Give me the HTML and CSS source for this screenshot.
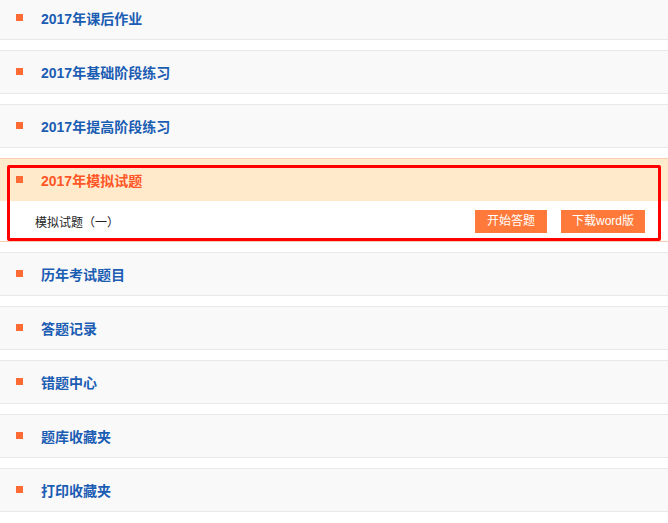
FILE: index.html
```html
<!DOCTYPE html>
<html lang="zh-CN">

<head>
    <meta charset="UTF-8">
    <meta name="viewport" content="width=device-width, initial-scale=1.0">
    <title>题库</title>

    <!-- Custom style. -->
    <link rel="stylesheet" href="styles.css">
</head>

<body>
    <ul class="menu">
        <li class="item">
            <div class="item-head"><span class="dot"></span>2017年课后作业</div>
        </li>
        <li class="item">
            <div class="item-head"><span class="dot"></span>2017年基础阶段练习</div>
        </li>
        <li class="item">
            <div class="item-head"><span class="dot"></span>2017年提高阶段练习</div>
        </li>
        <li class="item item_active">
            <div class="item-head"><span class="dot"></span>2017年模拟试题</div>
            <div class="item-body">
                <span class="paper">模拟试题（一）</span>
                <div class="actions">
                    <a class="btn btn-start" href="#">开始答题</a>
                    <a class="btn btn-download" href="#">下载word版</a>
                </div>
            </div>
            <div class="highlight"></div>
        </li>
        <li class="item">
            <div class="item-head"><span class="dot"></span>历年考试题目</div>
        </li>
        <li class="item">
            <div class="item-head"><span class="dot"></span>答题记录</div>
        </li>
        <li class="item">
            <div class="item-head"><span class="dot"></span>错题中心</div>
        </li>
        <li class="item">
            <div class="item-head"><span class="dot"></span>题库收藏夹</div>
        </li>
        <li class="item">
            <div class="item-head"><span class="dot"></span>打印收藏夹</div>
        </li>
    </ul>
</body>

</html>
```

FILE: styles.css
```css
body {
    margin: 0;
    font-family: "Liberation Sans", "Noto Sans CJK SC", sans-serif;
    background-color: white;
}

.menu {
    list-style: none;
    margin: -4px 0 0 0;
    padding: 0;
}

.item {
    position: relative;
    margin-bottom: 10px;
    background-color: #f9f9f9;
    border-top: 1px solid #e8e8e8;
    border-bottom: 1px solid #e8e8e8;
}

.item-head {
    height: 42px;
    display: flex;
    align-items: center;
    padding-left: 16px;
    font-size: 14px;
    font-weight: bold;
    color: #1b5db3;
}

.dot {
    width: 7px;
    height: 7px;
    margin-right: 18px;
    margin-top: -2px;
    background-color: #ff6b35;
}

.item_active {
    border-color: #f8cdb0;
    background-color: white;
}

.item_active .item-head {
    background-color: #ffebcb;
    color: #ff5627;
}

.item-body {
    height: 40px;
    display: flex;
    align-items: center;
    justify-content: space-between;
    padding: 0 23px 0 35px;
    font-size: 12px;
    color: #222;
}

.actions {
    display: flex;
    gap: 14px;
}

.btn {
    height: 23px;
    line-height: 23px;
    text-align: center;
    background-color: #ff7a3a;
    color: white;
    font-size: 12px;
    text-decoration: none;
}

.btn-start {
    width: 72px;
}

.btn-download {
    width: 84px;
}

/* annotation box drawn over the open item */
.highlight {
    position: absolute;
    left: 7px;
    top: 6px;
    width: 654px;
    height: 76px;
    box-sizing: border-box;
    border: 3px solid #ff0000;
    border-radius: 2px;
}
```
